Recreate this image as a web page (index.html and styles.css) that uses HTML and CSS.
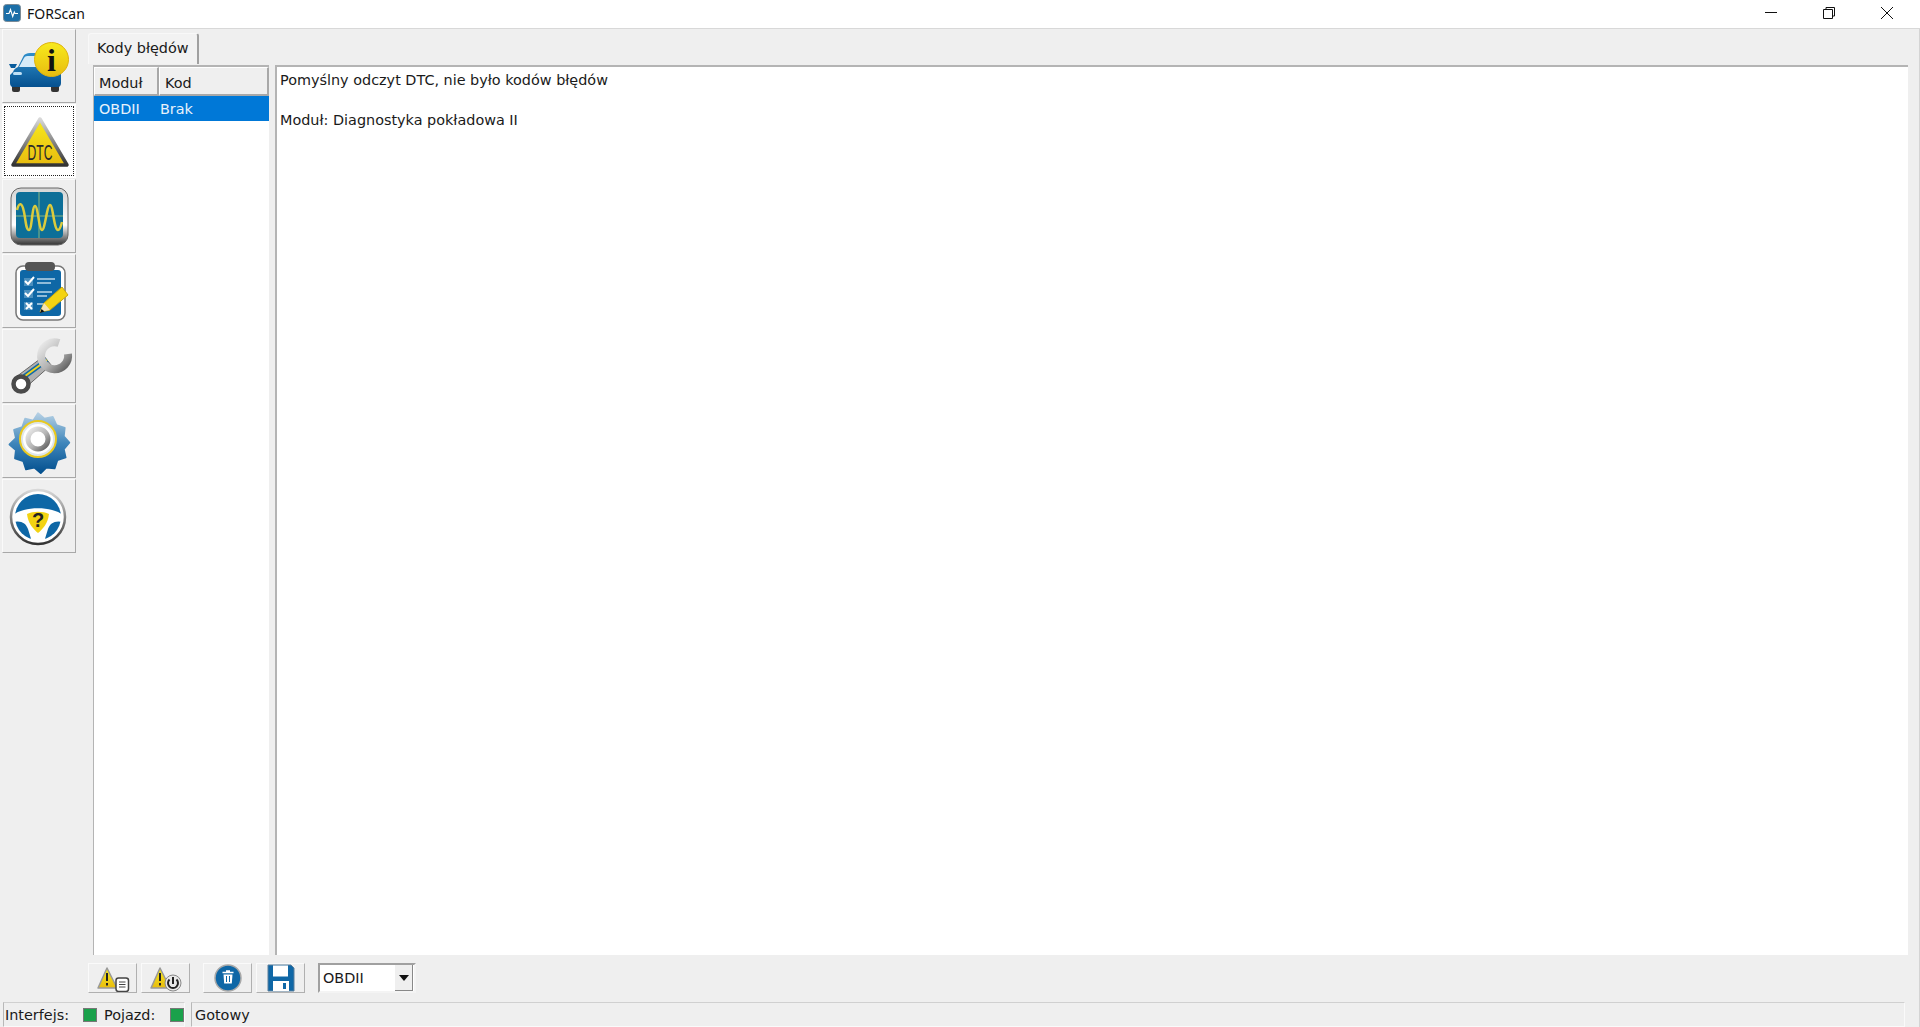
FILE: index.html
```html
<!DOCTYPE html>
<html lang="pl">
<head>
<meta charset="utf-8">
<title>FORScan</title>
<link rel="stylesheet" href="styles.css">
</head>
<body>
<svg class="defs" width="0" height="0" aria-hidden="true">
  <defs>
    <linearGradient id="blue" x1="0" y1="0" x2="0" y2="1"><stop offset="0" stop-color="#2f8fcb"/><stop offset="1" stop-color="#05508f"/></linearGradient>
    <linearGradient id="gearblue" x1="0" y1="0" x2="0" y2="1"><stop offset="0" stop-color="#b5d0e4"/><stop offset=".5" stop-color="#3f86bb"/><stop offset="1" stop-color="#03508f"/></linearGradient>
    <linearGradient id="yellow" x1="0" y1="0" x2="0" y2="1"><stop offset="0" stop-color="#f7ea1c"/><stop offset="1" stop-color="#e8bc10"/></linearGradient>
    <linearGradient id="steel" x1="0" y1="0" x2="1" y2="1"><stop offset="0" stop-color="#ececec"/><stop offset=".55" stop-color="#b4b4b4"/><stop offset="1" stop-color="#5a5a5a"/></linearGradient>
    <linearGradient id="bezel" x1="0" y1="0" x2="0" y2="1"><stop offset="0" stop-color="#d4d4d4"/><stop offset=".65" stop-color="#ffffff"/><stop offset="1" stop-color="#333333"/></linearGradient>
    <linearGradient id="tri" x1="0" y1="0" x2="0" y2="1"><stop offset="0" stop-color="#d8d8d8"/><stop offset="1" stop-color="#333333"/></linearGradient>
  </defs>
</svg>
<div class="window">
  <header class="titlebar">
    <svg class="app-icon" viewBox="0 0 18 18"><rect x=".5" y=".5" width="17" height="17" rx="3" fill="#1c6fa8" stroke="#7a8a96"/><path d="M3 9.500h3l1.500-4 2.200 7 1.600-4.500.7 1.500H15" fill="none" stroke="#fff" stroke-width="1.100"/></svg>
    <span class="app-title">FORScan</span>
    <div class="controls">
      <span class="ctl"><svg viewBox="0 0 14 14" class="ctl-icon"><path d="M1 6.500h12" stroke="#111" fill="none"/></svg></span>
      <span class="ctl"><svg viewBox="0 0 14 14" class="ctl-icon"><path d="M1.500 3.500h9v9h-9zM4 3.500V1.500h8.500v8.500h-2" stroke="#111" fill="none"/></svg></span>
      <span class="ctl"><svg viewBox="0 0 14 14" class="ctl-icon"><path d="M1 1l12 12M13 1L1 13" stroke="#111" fill="none"/></svg></span>
    </div>
  </header>

  <div class="client">
    <nav class="sidebar">
      <button class="side-btn">
        <svg viewBox="0 0 74 74" class="side-icon">
          <rect x="10" y="54" width="8" height="9" rx="2" fill="#333"/><rect x="49" y="54" width="8" height="9" rx="2" fill="#333"/>
          <path d="M11 43c1-3 3-4 5-5l5-10c1-3 4-4 7-4h14c4 0 6 1 8 4l5 10c3 2 3 4 4 6v10c0 2-1 4-3 4H11c-2 0-3-2-3-4v-8z" fill="url(#blue)"/>
          <path d="M17 38l5-9c1-2 3-2 5-2h13l5 11z" fill="#d6ebf8"/>
          <path d="M7 35l8 0-2 4H9z" fill="#0a5c9c"/>
          <rect x="11" y="43" width="9" height="3" rx="1.500" fill="#bfe0f5"/><rect x="47" y="43" width="9" height="3" rx="1.500" fill="#bfe0f5"/>
          <circle cx="49.500" cy="30.500" r="17" fill="url(#yellow)" stroke="#e0b20e"/>
          <text x="49.500" y="41.500" class="svg-i">i</text>
        </svg>
      </button>
      <button class="side-btn is-active">
        <svg viewBox="0 0 74 74" class="side-icon">
          <path d="M38 15L65 61H11z" fill="url(#yellow)" stroke="url(#tri)" stroke-width="3.500" stroke-linejoin="round"/>
          <text x="38" y="56" class="svg-dtc" textLength="25" lengthAdjust="spacingAndGlyphs">DTC</text>
        </svg>
      </button>
      <button class="side-btn">
        <svg viewBox="0 0 74 74" class="side-icon">
          <rect x="9" y="9" width="57" height="57" rx="10" fill="url(#bezel)" stroke="#666"/>
          <rect x="14" y="13" width="47" height="46" rx="4" fill="#0d6f98"/>
          <path d="M14 37h47M37 13v46" stroke="#5f9f88" stroke-width="1.500"/>
          <path d="M15 31C17 23 20 23 22 33S24 51 27 51s3-24 6-24 4 24 7 24 5-25 8-25 4 25 8 25c2 0 3-4 4-8" fill="none" stroke="#dccb3c" stroke-width="2.500"/>
        </svg>
      </button>
      <button class="side-btn">
        <svg viewBox="0 0 74 74" class="side-icon">
          <rect x="14" y="12" width="49" height="54" rx="7" fill="#fff" stroke="#777" stroke-width="1.500"/>
          <rect x="18" y="16" width="41" height="46" rx="3" fill="#0e67a6"/>
          <rect x="23" y="8" width="30" height="9" rx="4" fill="#555"/>
          <path d="M22 24h9v8h-9zM22 36h9v8h-9zM22 48h9v8h-9z" fill="#4b8fbe"/>
          <path d="M23 27l3 3 6-7M23 39l3 3 6-7M24 49l6 6M30 49l-6 6" fill="none" stroke="#fff" stroke-width="2"/>
          <path d="M35 25h18M35 29h14M35 38h15M35 42h10M35 50h8" stroke="#bcd7ea" stroke-width="1.500"/>
          <path d="M38 58l4-9 18-16 6 8-18 15z" fill="#f3d312" stroke="#c9a60c"/>
          <path d="M38 58l4-9 6 7z" fill="#f4e3b8"/><path d="M38 59l1.500-4 3 2.500z" fill="#111"/>
        </svg>
      </button>
      <button class="side-btn">
        <svg viewBox="0 0 74 74" class="side-icon">
          <path d="M14 48L42 27l7 9-27 24z" fill="#b0b0b0" stroke="#666" stroke-width="1"/>
          <path d="M19 50L45 31" stroke="#0f6aa8" stroke-width="5"/>
          <path d="M19 50L45 31" stroke="#f0d21c" stroke-width="2"/>
          <circle cx="19" cy="55" r="7.500" fill="#fff" stroke="#4a4a4a" stroke-width="4.500"/>
          <path d="M57 14A13.500 13.500 0 1 0 66 25" fill="none" stroke="url(#steel)" stroke-width="8"/>
        </svg>
      </button>
      <button class="side-btn">
        <svg viewBox="0 0 74 74" class="side-icon">
          <g transform="translate(36 35) scale(.92) translate(-36 -35)">
            <path d="M36 7l7 6 9-2 4 9 9 3-1 9 6 7-6 7 2 9-9 3-3 9-9-1-6 6-7-6-9 2-3-9-9-3 1-9-7-6 7-7-2-9 9-3 3-9 9 2z" fill="url(#gearblue)" stroke="url(#gearblue)" stroke-linejoin="round" stroke-width="2"/>
          </g>
          <circle cx="36" cy="35" r="18" fill="#dfe6ea" stroke="#e9c91f" stroke-width="2"/>
          <circle cx="36" cy="35" r="15" fill="#fff"/>
          <circle cx="36" cy="35" r="10" fill="#fff" stroke="url(#steel)" stroke-width="5"/>
        </svg>
      </button>
      <button class="side-btn">
        <svg viewBox="0 0 74 74" class="side-icon">
          <circle cx="36" cy="38" r="27" fill="#fff" stroke="url(#tri)" stroke-width="2.500"/>
          <circle cx="36" cy="38" r="23" fill="#0e67a6"/>
          <path d="M11 36C22 27 50 27 61 36L61 43C53 41 48 44 46 50L42 63H30L26 50C24 44 19 41 11 43Z" fill="#fff"/>
          <path d="M25 35C31 32 41 32 47 35C46 44 41 50 36 54C31 50 26 44 25 35Z" fill="#f3d312"/>
          <text x="36" y="48" class="svg-q">?</text>
        </svg>
      </button>
    </nav>

    <main class="main">
      <div class="tabstrip"><div class="tab">Kody błędów</div></div>

      <div class="panes">
        <section class="list-pane">
          <div class="list-head">
            <div class="head-cell head-mod">Moduł</div>
            <div class="head-cell head-kod">Kod</div>
          </div>
          <div class="list-row">
            <span class="cell-mod">OBDII</span>
            <span class="cell-kod">Brak</span>
          </div>
        </section>
        <section class="text-pane">
          <p class="line">Pomyślny odczyt DTC, nie było kodów błędów</p>
          <p class="line">&nbsp;</p>
          <p class="line">Moduł: Diagnostyka pokładowa II</p>
        </section>
      </div>

      <div class="toolbar">
        <button class="tool-btn">
          <svg viewBox="0 0 40 28" class="tool-icon">
            <path d="M14 4L24 24H5z" fill="url(#yellow)" stroke="#999" stroke-width="1.500" stroke-linejoin="round"/>
            <path d="M14 9v8M14 19v2.500" stroke="#222" stroke-width="2"/>
            <rect x="23" y="14" width="12.500" height="13.500" rx="2.500" fill="#fff" stroke="#444" stroke-width="1.500"/>
            <path d="M26 18h6.500M26 20.500h6.500M26 23h6.500" stroke="#444"/>
          </svg>
        </button>
        <button class="tool-btn">
          <svg viewBox="0 0 40 28" class="tool-icon">
            <path d="M14 4L24 24H5z" fill="url(#yellow)" stroke="#999" stroke-width="1.500" stroke-linejoin="round"/>
            <path d="M14 9v8M14 19v2.500" stroke="#222" stroke-width="2"/>
            <circle cx="27" cy="19" r="8" fill="#e8e8e8" stroke="#888"/>
            <path d="M23.500 15.500a5 5 0 1 0 7 0M27 13v7" fill="none" stroke="#222" stroke-width="2"/>
          </svg>
        </button>
        <button class="tool-btn tool-gap">
          <svg viewBox="0 0 40 28" class="tool-icon">
            <circle cx="20" cy="14" r="13" fill="#0f67a6" stroke="#a8a8a8" stroke-width="1.500"/>
            <path d="M14.500 8.500h11M18 7h4" stroke="#fff" stroke-width="1.500"/>
            <path d="M15.500 10.500h9l-.7 9h-7.600z" fill="#fff"/>
            <path d="M18.500 12v6M21.500 12v6" stroke="#0f67a6"/>
          </svg>
        </button>
        <button class="tool-btn">
          <svg viewBox="0 0 40 28" class="tool-icon">
            <path d="M7 1h23l3 3v23H7z" fill="#0f67a6" stroke="#5b7f9b"/>
            <rect x="12" y="1.500" width="15" height="11" fill="#fff"/>
            <rect x="12" y="17" width="16" height="10" fill="#fff"/>
            <rect x="22" y="19" width="3" height="6" fill="#0f67a6"/>
          </svg>
        </button>
        <div class="combo">
          <span class="combo-text">OBDII</span>
          <span class="combo-arrow"></span>
        </div>
      </div>
    </main>
  </div>

  <footer class="statusbar">
    <div class="status-cell status-left">
      <span class="st-label st-iface">Interfejs:</span>
      <span class="led"></span>
      <span class="st-label st-veh">Pojazd:</span>
      <span class="led"></span>
    </div>
    <div class="status-cell status-right">Gotowy</div>
  </footer>
</div>
</body>
</html>
```
FILE: styles.css
```css
* { box-sizing: border-box; }
html, body { margin: 0; padding: 0; height: 100%; overflow: hidden; }
body { font-family: "DejaVu Sans", sans-serif; font-size: 14.400px; color: #1a1a1a; background: #efefef; }
.defs { position: absolute; }
.window { display: flex; flex-direction: column; height: 1027px; border-right: 1px solid #d4d4d4; }

.titlebar { display: flex; align-items: center; height: 29px; flex: none; background: #fff; border-bottom: 1px solid #d8d8d8; padding: 0 0 2px 3px; margin-right: -1px; }
.app-icon { width: 18px; height: 18px; flex: none; }
.app-title { margin-left: 6px; font-family: "Noto Sans", sans-serif; font-size: 14px; color: #111; }
.controls { margin-left: auto; display: flex; padding-right: 4px; }
.ctl { width: 58px; height: 26px; display: flex; align-items: center; justify-content: center; }
.ctl-icon { width: 14px; height: 14px; }

.client { flex: 1; display: flex; min-height: 0; }
.sidebar { width: 88px; flex: none; display: flex; flex-direction: column; gap: 1px; padding-left: 2px; }
.side-btn { width: 74px; height: 74px; padding: 0; flex: none; background: #efefef; border: 1px solid; border-color: #fafafa #a8a8a8 #a8a8a8 #fafafa; display: block; position: relative; }
.side-icon { width: 74px; height: 74px; display: block; margin: -1px; }
.side-btn.is-active { background: #fff; border-color: #fff; outline: 1px dotted #222; outline-offset: -3px; }
.svg-i { font-family: "Liberation Serif", serif; font-weight: 700; font-size: 32px; text-anchor: middle; fill: #111; }
.svg-dtc { font-family: "Liberation Sans", sans-serif; font-size: 22px; text-anchor: middle; fill: #2a2a2a; }
.svg-q { font-family: "Liberation Sans", sans-serif; font-weight: 700; font-size: 20px; text-anchor: middle; fill: #222; }

.main { flex: 1; min-width: 0; display: flex; flex-direction: column; }
.tabstrip { height: 36px; flex: none; padding-top: 4px; }
.tab { width: 111px; height: 31px; padding: 6px 0 0 8px; background: #f2f2f2; border-top: 1px solid #f8f8f8; border-left: 1px solid #f8f8f8; border-right: 2px solid #a0a0a0; border-radius: 3px 3px 0 0; white-space: nowrap; }

.panes { flex: 1; min-height: 0; display: flex; gap: 6px; margin: 0 11px 0 5px; }
.list-pane, .text-pane { background: #fff; border-top: 2px solid #b4b4b4; border-left: 1px solid #b4b4b4; }
.list-pane { width: 176px; flex: none; }
.text-pane { flex: 1; padding: 3px 3px; border-left-width: 2px; }
.line { margin: 0; height: 20px; line-height: 20px; white-space: nowrap; }

.list-head { display: flex; height: 29px; background: #efefef; }
.head-cell { height: 29px; line-height: 30px; border-top: 1px solid #fff; border-left: 1px solid #fff; border-right: 2px solid #a8a8a8; border-bottom: 2px solid #a8a8a8; }
.head-mod { width: 65px; padding-left: 4px; }
.head-kod { flex: 1; padding-left: 5px; }
.list-row { display: flex; height: 25px; line-height: 26px; background: #0078d7; color: #e8f2fb; }
.cell-mod { width: 66px; padding-left: 5px; }

.toolbar { height: 47px; flex: none; display: flex; align-items: flex-start; padding-top: 8px; gap: 4px; }
.tool-btn { width: 49px; height: 30px; padding: 0; background: #efefef; border: 1px solid; border-color: #fafafa #b0b0b0 #b0b0b0 #fafafa; display: flex; align-items: center; justify-content: center; }
.tool-gap { margin-left: 9px; }
.tool-icon { width: 40px; height: 28px; display: block; flex: none; }
.combo { margin-left: 9px; width: 98px; height: 30px; background: #fff; border: 2px solid; border-color: #a0a0a0 #f4f4f4 #f4f4f4 #a0a0a0; display: flex; align-items: center; padding-left: 3px; position: relative; }
.combo-text { flex: 1; }
.combo-arrow { width: 18px; height: 26px; background: #efefef; border-right: 1px solid #888; border-bottom: 1px solid #888; display: flex; align-items: center; justify-content: center; margin-right: 1px; }
.combo-arrow::after { content: ""; border-left: 5px solid transparent; border-right: 5px solid transparent; border-top: 6px solid #111; }

.statusbar { height: 25px; flex: none; display: flex; gap: 6px; padding-left: 3px; padding-right: 14px; }
.status-cell { height: 25px; border-top: 1px solid #d0d0d0; border-left: 1px solid #b8b8b8; border-right: 1px solid #fafafa; border-bottom: 1px solid #fafafa; }
.status-left { width: 182px; display: flex; align-items: center; padding-left: 1px; }
.status-right { flex: 1; line-height: 24px; padding-left: 3px; }
.st-label { white-space: nowrap; }
.st-iface { width: 79px; }
.st-veh { width: 59px; margin-left: 7px; flex: none; width: 66px; }
.led { width: 14px; height: 14px; background: #1aa14b; border: 1px solid #777; flex: none; }
```
